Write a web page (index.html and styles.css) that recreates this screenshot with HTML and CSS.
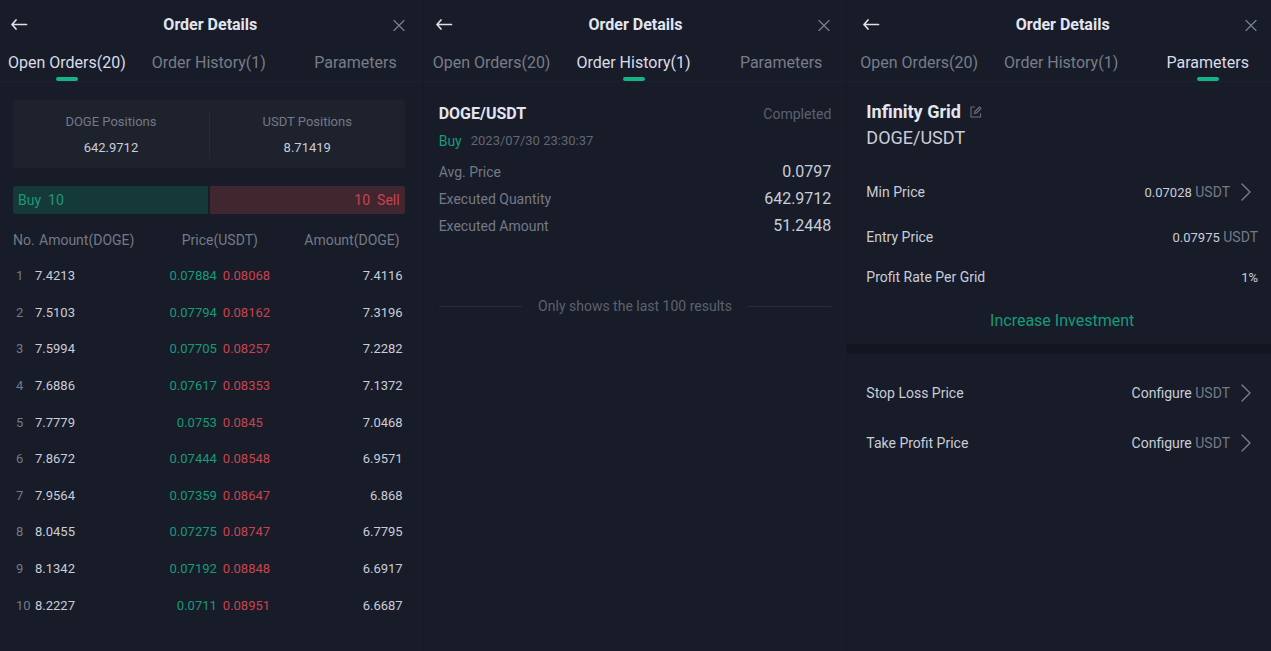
FILE: index.html
```html
<!DOCTYPE html>
<html lang="en">
<head>
<meta charset="utf-8">
<title>Order Details</title>
<link rel="stylesheet" href="styles.css">
</head>
<body>
<main class="screens">
  <section class="panel panel-orders">
    <header class="head">
      <button class="icon-btn" aria-label="Back"><svg width="17" height="12" viewBox="0 0 17 12"><path class="arrow" d="M5 1 1 5.500l4 4.500M1 5.500h14.500"/></svg></button>
      <h1 class="title">Order Details</h1>
      <button class="icon-btn" aria-label="Close"><svg width="12" height="12" viewBox="0 0 12 12"><path class="cross" d="M1 1.500l10 10M11 1.500 1 11.500"/></svg></button>
    </header>
    <nav class="tabs">
      <button class="tab active">Open Orders(20)</button>
      <button class="tab">Order History(1)</button>
      <button class="tab">Parameters</button>
    </nav>
    <div class="content">
      <dl class="positions">
        <div class="position"><dt>DOGE Positions</dt><dd>642.9712</dd></div>
        <div class="position"><dt>USDT Positions</dt><dd>8.71419</dd></div>
      </dl>
      <div class="ratio">
        <div class="ratio-buy"><span>Buy</span><span>10</span></div>
        <div class="ratio-sell"><span>10</span><span>Sell</span></div>
      </div>
      <table class="orders">
        <colgroup><col class="col-no"><col><col class="col-price"><col class="col-price"><col></colgroup>
        <thead><tr><th class="no">No.</th><th class="amount">Amount(DOGE)</th><th class="price" colspan="2">Price(USDT)</th><th class="last">Amount(DOGE)</th></tr></thead>
        <tbody>
          <tr><td class="no">1</td><td>7.4213</td><td class="buy">0.07884</td><td class="sell">0.08068</td><td class="last">7.4116</td></tr>
          <tr><td class="no">2</td><td>7.5103</td><td class="buy">0.07794</td><td class="sell">0.08162</td><td class="last">7.3196</td></tr>
          <tr><td class="no">3</td><td>7.5994</td><td class="buy">0.07705</td><td class="sell">0.08257</td><td class="last">7.2282</td></tr>
          <tr><td class="no">4</td><td>7.6886</td><td class="buy">0.07617</td><td class="sell">0.08353</td><td class="last">7.1372</td></tr>
          <tr><td class="no">5</td><td>7.7779</td><td class="buy">0.0753</td><td class="sell">0.0845</td><td class="last">7.0468</td></tr>
          <tr><td class="no">6</td><td>7.8672</td><td class="buy">0.07444</td><td class="sell">0.08548</td><td class="last">6.9571</td></tr>
          <tr><td class="no">7</td><td>7.9564</td><td class="buy">0.07359</td><td class="sell">0.08647</td><td class="last">6.868</td></tr>
          <tr><td class="no">8</td><td>8.0455</td><td class="buy">0.07275</td><td class="sell">0.08747</td><td class="last">6.7795</td></tr>
          <tr><td class="no">9</td><td>8.1342</td><td class="buy">0.07192</td><td class="sell">0.08848</td><td class="last">6.6917</td></tr>
          <tr><td class="no">10</td><td>8.2227</td><td class="buy">0.0711</td><td class="sell">0.08951</td><td class="last">6.6687</td></tr>
        </tbody>
      </table>
    </div>
  </section>

  <section class="panel panel-history">
    <header class="head">
      <button class="icon-btn" aria-label="Back"><svg width="17" height="12" viewBox="0 0 17 12"><path class="arrow" d="M5 1 1 5.500l4 4.500M1 5.500h14.500"/></svg></button>
      <h1 class="title">Order Details</h1>
      <button class="icon-btn" aria-label="Close"><svg width="12" height="12" viewBox="0 0 12 12"><path class="cross" d="M1 1.500l10 10M11 1.500 1 11.500"/></svg></button>
    </header>
    <nav class="tabs">
      <button class="tab">Open Orders(20)</button>
      <button class="tab active">Order History(1)</button>
      <button class="tab">Parameters</button>
    </nav>
    <div class="content">
      <article class="trade">
        <div class="trade-head"><h2>DOGE/USDT</h2><span>Completed</span></div>
        <p class="trade-time"><span class="side">Buy</span><time>2023/07/30 23:30:37</time></p>
        <dl class="facts">
          <div><dt>Avg. Price</dt><dd>0.0797</dd></div>
          <div><dt>Executed Quantity</dt><dd>642.9712</dd></div>
          <div><dt>Executed Amount</dt><dd>51.2448</dd></div>
        </dl>
      </article>
      <p class="end-note">Only shows the last 100 results</p>
    </div>
  </section>

  <section class="panel panel-params">
    <header class="head">
      <button class="icon-btn" aria-label="Back"><svg width="17" height="12" viewBox="0 0 17 12"><path class="arrow" d="M5 1 1 5.500l4 4.500M1 5.500h14.500"/></svg></button>
      <h1 class="title">Order Details</h1>
      <button class="icon-btn" aria-label="Close"><svg width="12" height="12" viewBox="0 0 12 12"><path class="cross" d="M1 1.500l10 10M11 1.500 1 11.500"/></svg></button>
    </header>
    <nav class="tabs">
      <button class="tab">Open Orders(20)</button>
      <button class="tab">Order History(1)</button>
      <button class="tab active">Parameters</button>
    </nav>
    <div class="content">
      <div class="strategy">
        <h2>Infinity Grid</h2>
        <button class="icon-btn" aria-label="Rename"><svg width="12" height="12" viewBox="0 0 12 12"><path class="edit" d="M4.500 1H1v10h9.500V7.500M4.500 7.500 5 5.500 9.500 1l1.500 1.500L6.500 7z"/></svg></button>
      </div>
      <p class="pair">DOGE/USDT</p>
      <div class="params">
        <button class="param param-link"><span>Min Price</span><span class="value"><span class="number">0.07028</span> <span class="unit">USDT</span></span><svg width="10" height="18" viewBox="0 0 10 18"><path class="chevron" d="M1 1l8 8-8 8"/></svg></button>
        <div class="param"><span>Entry Price</span><span class="value"><span class="number">0.07975</span> <span class="unit">USDT</span></span></div>
        <div class="param"><span>Profit Rate Per Grid</span><span class="value"><span class="number">1%</span></span></div>
      </div>
      <button class="invest">Increase Investment</button>
    </div>
    <hr class="band">
    <div class="content limits">
      <button class="param param-link"><span>Stop Loss Price</span><span class="value">Configure <span class="unit">USDT</span></span><svg width="10" height="18" viewBox="0 0 10 18"><path class="chevron" d="M1 1l8 8-8 8"/></svg></button>
      <button class="param param-link"><span>Take Profit Price</span><span class="value">Configure <span class="unit">USDT</span></span><svg width="10" height="18" viewBox="0 0 10 18"><path class="chevron" d="M1 1l8 8-8 8"/></svg></button>
    </div>
  </section>
</main>
</body>
</html>
```
FILE: styles.css
```css
:root {
  --bg: #171c28;
  --line: #1c212d;
  --text: #c9ccd9;
  --bright: #e3e5f0;
  --muted: #747987;
  --dim: #5c616e;
  --green: #159b78;
  --red: #c9434f;
}

* { box-sizing: border-box; }

body {
  margin: 0;
  background: var(--bg);
  color: var(--text);
  font: 13px/20px Roboto, "Liberation Sans", sans-serif;
}

h1, h2, p, dl, dd { margin: 0; }

button {
  padding: 0;
  border: 0;
  background: none;
  color: inherit;
  font: inherit;
  cursor: pointer;
}

svg { display: block; fill: none; stroke-linecap: round; stroke-linejoin: round; }

.screens {
  display: grid;
  grid-template-columns: repeat(3, minmax(0, 1fr));
  min-height: 100vh;
}

.panel { --start: 0px; --end: 5px; }
.panel-history { --start: 1px; --end: 3px; }
.panel-params { --start: 5px; --end: 0px; }
.panel + .panel { box-shadow: -1px 0 #141923; }

.head {
  display: grid;
  grid-template-columns: 17px 1fr 12px;
  align-items: center;
  height: 50px;
  padding: 0 calc(14px + var(--end)) 0 calc(11px + var(--start));
}

.title {
  color: var(--bright);
  font-size: 16px;
  font-weight: 700;
  text-align: center;
}

.arrow { stroke: #dcdee8; stroke-width: 1.7; }
.cross { stroke: #7b808d; stroke-width: 1.2; }
.edit { stroke: #696e7b; stroke-width: 1.1; }
.chevron { stroke: #7b808d; stroke-width: 1.3; }

.tabs {
  display: flex;
  gap: 26px;
  height: 32px;
  padding: 0 calc(22px + var(--end)) 0 calc(8px + var(--start));
  border-bottom: 1px solid var(--line);
}

.tab {
  display: flex;
  flex-direction: column;
  align-items: center;
  justify-content: space-between;
  padding-top: 3px;
  color: #777c89;
  font-size: 16px;
  white-space: nowrap;
}

.tab:last-child { margin-left: auto; }
.tab.active { color: #dadce8; }

.tab.active::after {
  content: "";
  width: 22px;
  height: 4px;
  border-radius: 2px;
  background: #13b488;
}

.content { padding: 0 calc(14px + var(--end)) 0 calc(13px + var(--start)); }
.panel + .panel .content { padding-left: calc(14px + var(--start)); padding-right: calc(13px + var(--end)); }

.positions {
  display: grid;
  grid-template-columns: 1fr 1fr;
  margin-top: 18px;
  padding: 12px 0 10px;
  border-radius: 3px;
  background: #1e222d;
}

.position {
  display: grid;
  gap: 6px;
  text-align: center;
}

.position + .position { border-left: 1px solid #262b36; }
.position dt { color: var(--muted); }

.ratio {
  display: grid;
  grid-template-columns: 1fr 1fr;
  gap: 2px;
  margin-top: 18px;
  font-size: 14px;
  line-height: 28px;
}

.ratio-buy, .ratio-sell {
  display: flex;
  gap: 7px;
  padding: 0 5px;
}

.ratio-buy { border-radius: 2px 0 0 2px; background: #153938; color: var(--green); }
.ratio-sell { justify-content: flex-end; border-radius: 0 2px 2px 0; background: #40262f; color: var(--red); }

.orders {
  width: 100%;
  height: 403px;
  margin-top: 7px;
  border-collapse: collapse;
  table-layout: fixed;
}

.orders th, .orders td { padding: 0; text-align: left; white-space: nowrap; }
.orders th { height: 37px; color: var(--muted); font-size: 14px; font-weight: 400; }
.orders .no { color: var(--muted); }
.orders td.no { padding-left: 3px; }
.orders th.amount { padding-left: 4px; }
.orders th.price { text-align: center; }
.orders .last { padding-right: 2px; text-align: right; }
.orders th.last { padding-right: 5px; }
.orders .buy { padding-right: 3px; color: var(--green); text-align: right; }
.orders .sell { padding-left: 3px; color: var(--red); }
.col-no { width: 22px; }
.col-price { width: 64px; }

.trade { padding-top: 22px; }

.trade-head, .facts div {
  display: flex;
  align-items: center;
  justify-content: space-between;
}

.trade-head h2 { color: var(--bright); font-size: 16px; font-weight: 700; }
.trade-head span { color: var(--dim); font-size: 14px; }

.trade-time {
  display: flex;
  gap: 9px;
  margin-top: 7px;
  color: #626774;
}

.side { color: var(--green); font-size: 14px; }
.facts { margin-top: 7px; }
.facts div { height: 27px; }
.facts dt { color: var(--muted); font-size: 14px; }
.facts dd { font-size: 16px; }

.end-note {
  display: flex;
  align-items: center;
  gap: 16px;
  margin-top: 57px;
  color: var(--dim);
  font-size: 14px;
}

.end-note::before, .end-note::after {
  content: "";
  flex: 1;
  height: 1px;
  background: #282d38;
}

.strategy {
  display: flex;
  align-items: center;
  gap: 9px;
  padding-top: 18px;
}

.strategy h2 { color: var(--bright); font-size: 18px; font-weight: 700; line-height: 24px; }
.pair { margin-bottom: 15px; font-size: 18px; line-height: 28px; }

.param {
  display: flex;
  align-items: center;
  width: 100%;
  height: 40px;
  font-size: 14px;
  text-align: left;
}

.param .value { margin-left: auto; }
.param .number { font-size: 13px; }
.param .unit { color: var(--muted); }
.param-link { height: 50px; padding-right: 7px; }
.param-link svg { margin-left: 11px; }

.invest {
  display: block;
  width: 100%;
  margin-top: 14px;
  color: var(--green);
  font-size: 16px;
}

.band { height: 10px; margin: 13px 0 0; border: 0; background: #111620; }
.limits { padding-top: 14px; }
```
